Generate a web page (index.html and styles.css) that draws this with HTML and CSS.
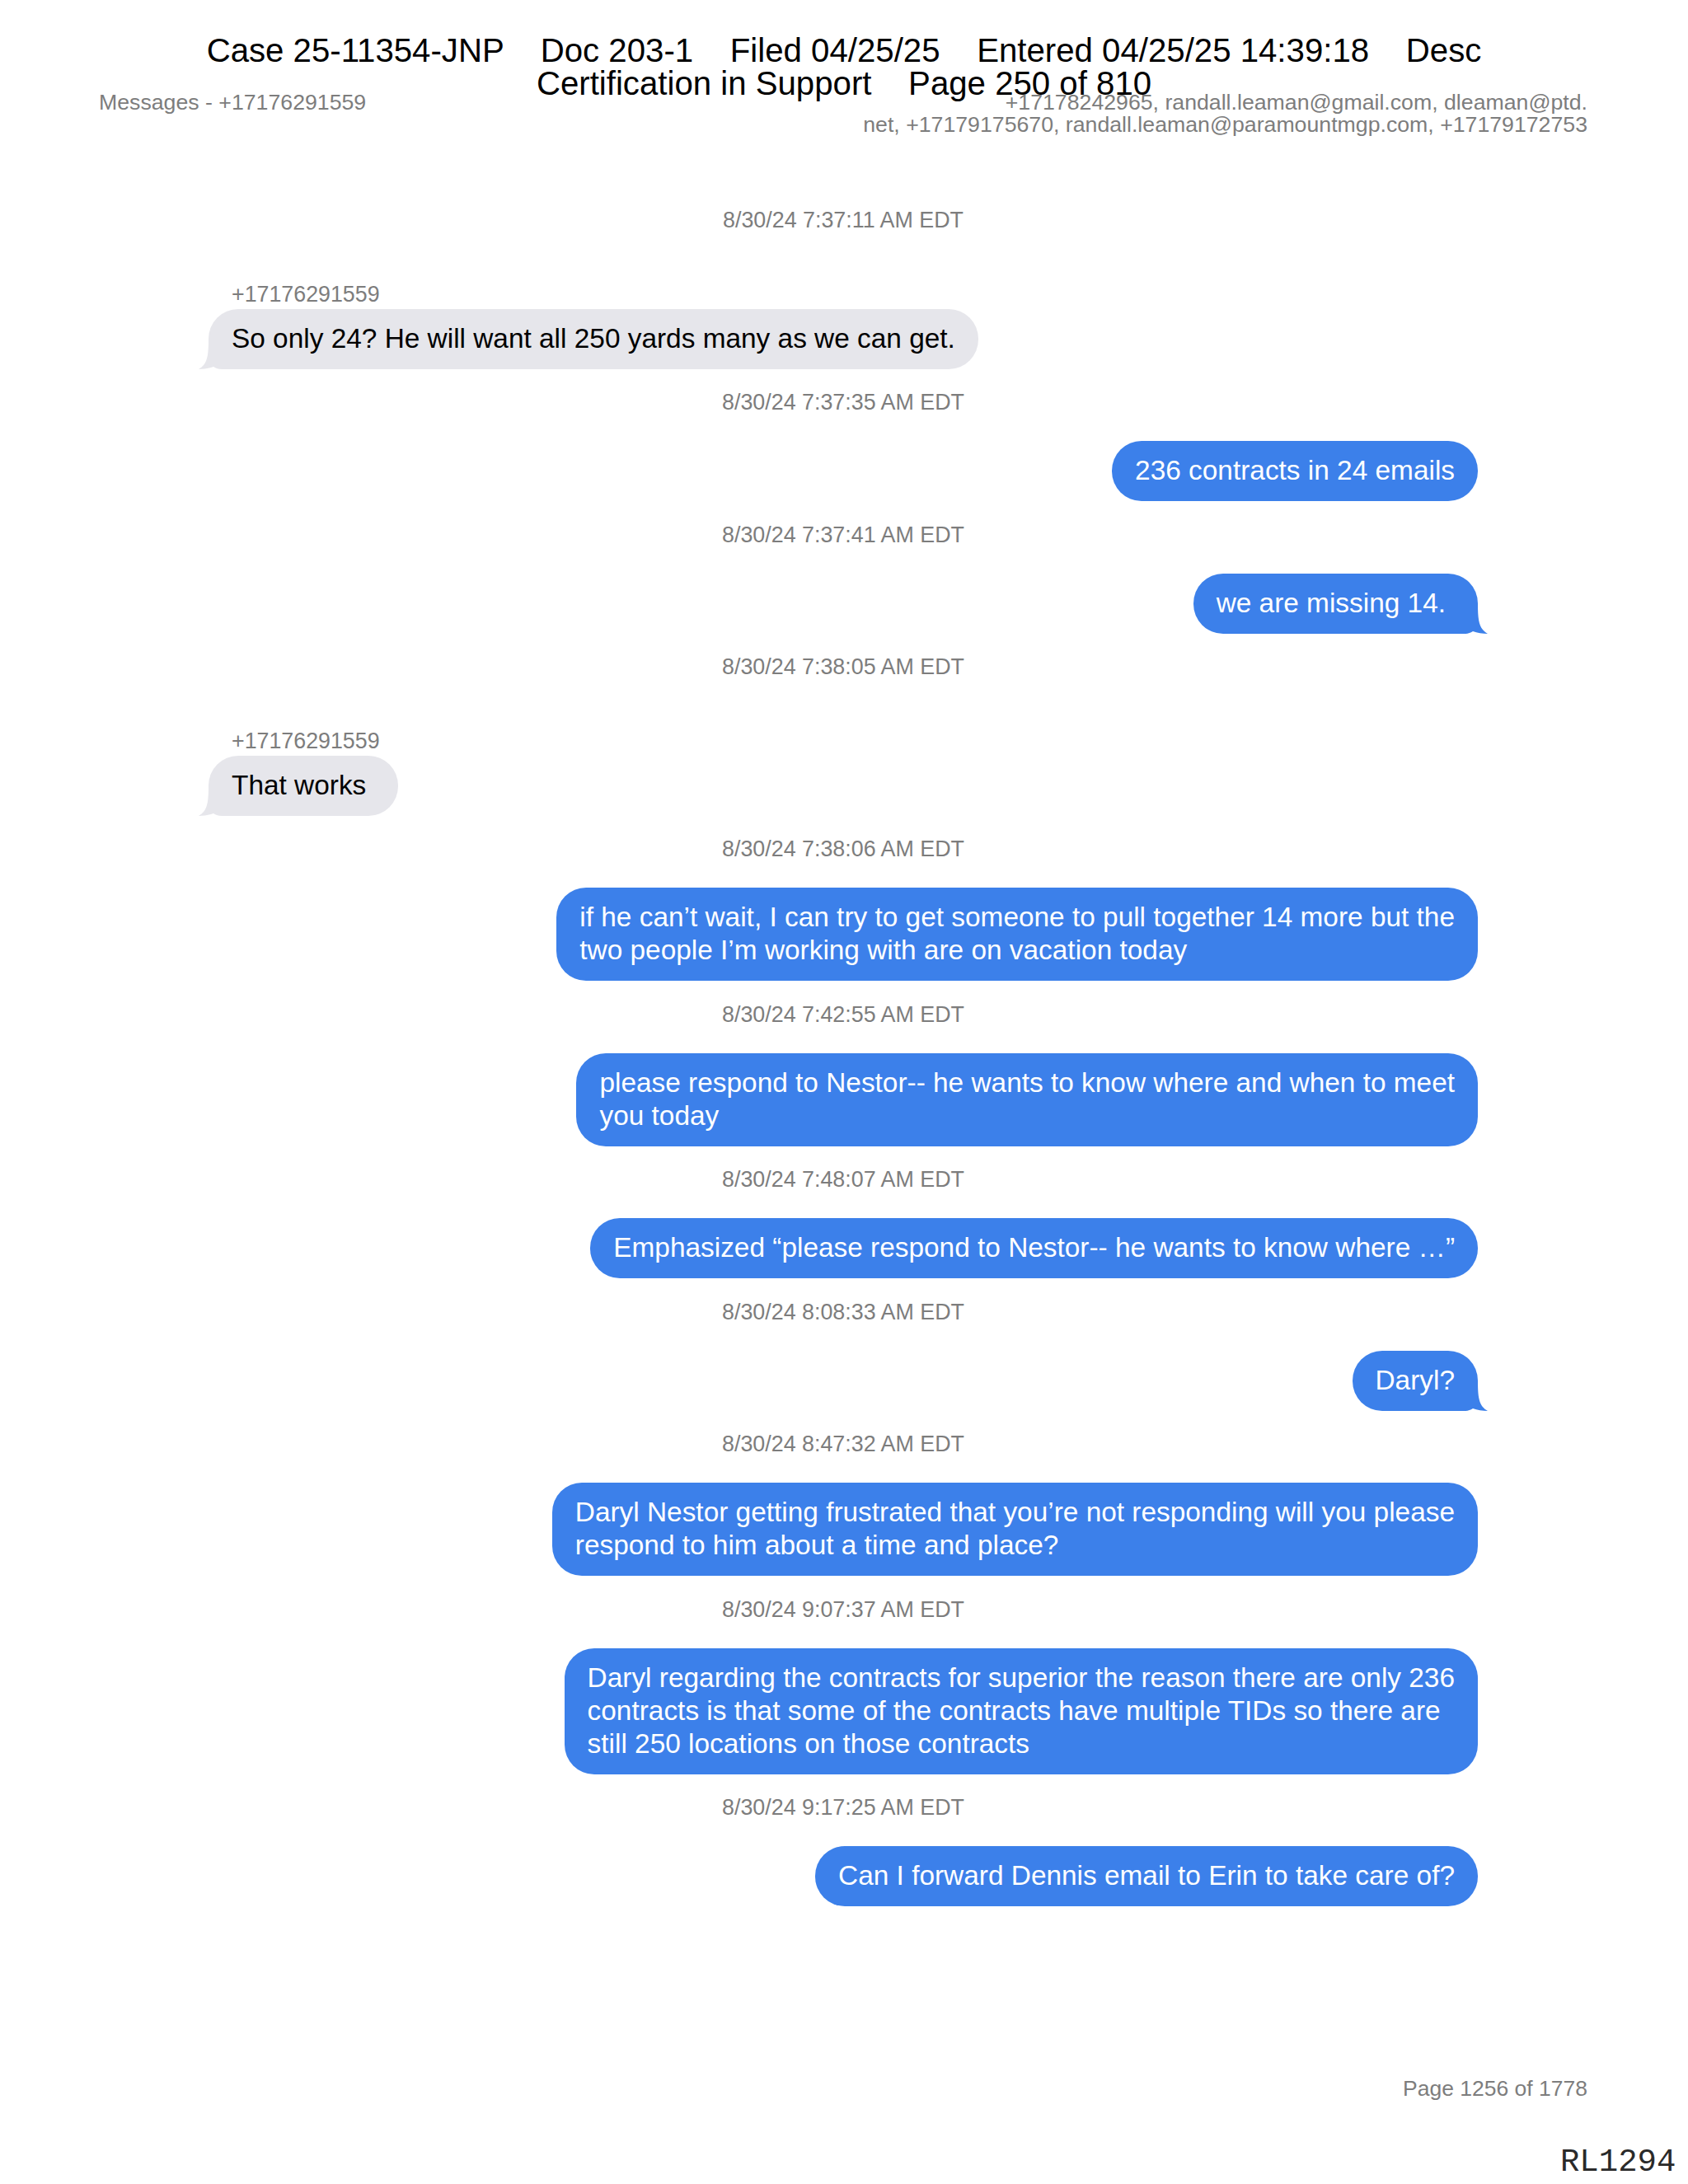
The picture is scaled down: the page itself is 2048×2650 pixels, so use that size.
FILE: index.html
```html
<!DOCTYPE html>
<html>
<head>
<meta charset="utf-8">
<link rel="stylesheet" href="styles.css">
</head>
<body>
<div class="page">
  <div class="stamp">Case 25-11354-JNP    Doc 203-1    Filed 04/25/25    Entered 04/25/25 14:39:18    Desc
Certification in Support    Page 250 of 810</div>

  <header class="top">
    <div class="top-left">Messages - +17176291559</div>
    <div class="top-right">+17178242965, randall.leaman@gmail.com, dleaman@ptd.<br>net, +17179175670, randall.leaman@paramountmgp.com, +17179172753</div>
  </header>

  <main class="thread">
    <div class="msg in">
      <div class="ts">8/30/24 7:37:11 AM EDT</div>
      <div class="sender">+17176291559</div>
      <div class="bubble"><span class="txt">So only 24? He will want all 250 yards many as we can get.</span><svg class="tail" viewBox="0 0 48 36" width="48" height="36"><path d="M0,0 L36,0 C36,22 38,30 48,36 C42,36 35,35 30,33 C27,35 24,36 20,36 L0,36 Z"/></svg></div>
    </div>
    <div class="msg out">
      <div class="ts">8/30/24 7:37:35 AM EDT</div>
      <div class="bubble"><span class="txt">236 contracts in 24 emails</span></div>
    </div>
    <div class="msg out">
      <div class="ts">8/30/24 7:37:41 AM EDT</div>
      <div class="bubble wide"><span class="txt">we are missing 14.</span><svg class="tail" viewBox="0 0 48 36" width="48" height="36"><path d="M0,0 L36,0 C36,22 38,30 48,36 C42,36 35,35 30,33 C27,35 24,36 20,36 L0,36 Z"/></svg></div>
    </div>
    <div class="msg in">
      <div class="ts">8/30/24 7:38:05 AM EDT</div>
      <div class="sender">+17176291559</div>
      <div class="bubble wide"><span class="txt">That works</span><svg class="tail" viewBox="0 0 48 36" width="48" height="36"><path d="M0,0 L36,0 C36,22 38,30 48,36 C42,36 35,35 30,33 C27,35 24,36 20,36 L0,36 Z"/></svg></div>
    </div>
    <div class="msg out">
      <div class="ts">8/30/24 7:38:06 AM EDT</div>
      <div class="bubble"><span class="txt">if he can’t wait, I can try to get someone to pull together 14 more but the<br>two people I’m working with are on vacation today</span></div>
    </div>
    <div class="msg out">
      <div class="ts">8/30/24 7:42:55 AM EDT</div>
      <div class="bubble"><span class="txt">please respond to Nestor-- he wants to know where and when to meet<br>you today</span></div>
    </div>
    <div class="msg out">
      <div class="ts">8/30/24 7:48:07 AM EDT</div>
      <div class="bubble"><span class="txt">Emphasized “please respond to Nestor-- he wants to know where …”</span></div>
    </div>
    <div class="msg out">
      <div class="ts">8/30/24 8:08:33 AM EDT</div>
      <div class="bubble"><span class="txt">Daryl?</span><svg class="tail" viewBox="0 0 48 36" width="48" height="36"><path d="M0,0 L36,0 C36,22 38,30 48,36 C42,36 35,35 30,33 C27,35 24,36 20,36 L0,36 Z"/></svg></div>
    </div>
    <div class="msg out">
      <div class="ts">8/30/24 8:47:32 AM EDT</div>
      <div class="bubble"><span class="txt">Daryl Nestor getting frustrated that you’re not responding will you please<br>respond to him about a time and place?</span></div>
    </div>
    <div class="msg out">
      <div class="ts">8/30/24 9:07:37 AM EDT</div>
      <div class="bubble"><span class="txt">Daryl regarding the contracts for superior the reason there are only 236<br>contracts is that some of the contracts have multiple TIDs so there are<br>still 250 locations on those contracts</span></div>
    </div>
    <div class="msg out">
      <div class="ts">8/30/24 9:17:25 AM EDT</div>
      <div class="bubble"><span class="txt">Can I forward Dennis email to Erin to take care of?</span></div>
    </div>
  </main>

  <footer class="foot">Page 1256 of 1778</footer>
  <div class="bates">RL1294</div>
</div>
</body>
</html>
```
FILE: styles.css
```css
html, body {
  margin: 0;
  padding: 0;
  background: #ffffff;
}

.page {
  position: relative;
  width: 2048px;
  height: 2650px;
  box-sizing: border-box;
  padding: 110.5px 122px 101px 120px;
  display: flex;
  flex-direction: column;
  font-family: "Liberation Sans", Arial, sans-serif;
  color: #000;
}

.stamp {
  position: absolute;
  top: 42px;
  left: 0;
  right: 0;
  text-align: center;
  white-space: pre;
  font-size: 40.2px;
  line-height: 40px;
  color: #000;
}

.top {
  display: flex;
  justify-content: space-between;
  align-items: flex-start;
  font-size: 26.7px;
  line-height: 27px;
  color: #7d7d7d;
}

.top-right {
  text-align: right;
}

.thread {
  display: flex;
  flex-direction: column;
  margin: 0 133px;
  padding-top: 87.5px;
}

.msg {
  display: flex;
  flex-direction: column;
}

.msg.out {
  align-items: flex-end;
}

.msg.in {
  align-items: flex-start;
}

.ts {
  align-self: stretch;
  text-align: center;
  font-size: 26.85px;
  line-height: 30px;
  color: #7d7d7d;
  margin-bottom: 32px;
}

.msg.in .ts {
  margin-bottom: 60px;
}

.sender {
  font-size: 26.8px;
  line-height: 30px;
  color: #7d7d7d;
  padding-left: 28px;
  margin-bottom: 2.5px;
}

.bubble {
  position: relative;
  isolation: isolate;
  box-sizing: border-box;
  padding: 16px 28px 17px 28px;
  border-radius: 36px;
  font-size: 33.4px;
  line-height: 40px;
  white-space: nowrap;
  margin-bottom: 25.5px;
}

.bubble.wide {
  padding-right: 39px;
}

.txt {
  position: relative;
  z-index: 1;
}

.msg.out .bubble {
  background: #3c80ea;
  color: #ffffff;
}

.msg.in .bubble {
  background: #e6e6eb;
  color: #000000;
}

.tail {
  position: absolute;
  bottom: 0;
  display: block;
  z-index: 0;
}

.msg.out .tail {
  right: -12px;
  fill: #3c80ea;
}

.msg.in .tail {
  left: -12px;
  fill: #e6e6eb;
  transform: scaleX(-1);
}

.foot {
  margin-top: auto;
  align-self: flex-end;
  font-size: 26.5px;
  line-height: 30px;
  color: #7d7d7d;
}

.bates {
  position: absolute;
  right: 14.6px;
  top: 2605px;
  font-family: "Liberation Mono", "Courier New", monospace;
  font-size: 39px;
  line-height: 39px;
  color: #2a2a2a;
}
```
